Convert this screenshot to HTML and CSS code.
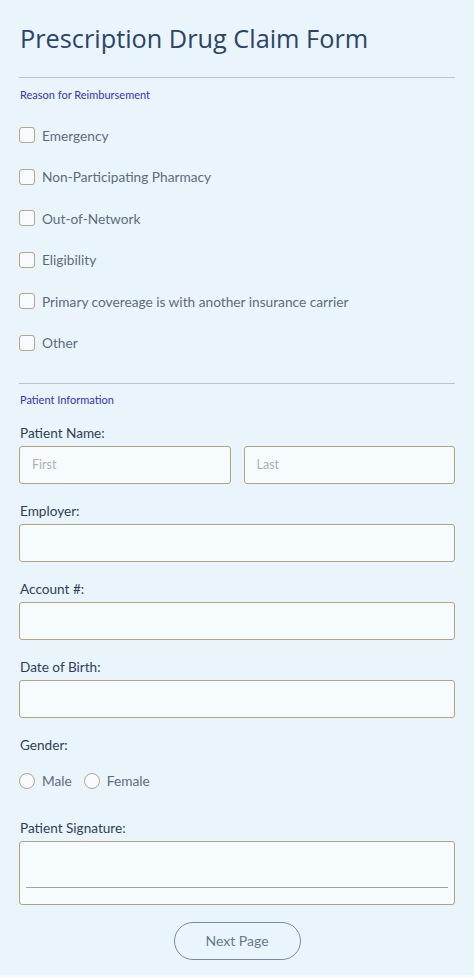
FILE: index.html
```html
<!DOCTYPE html>
<html>
<head>
<meta charset="utf-8">
<link rel="stylesheet" href="styles.css">
</head>
<body>
<form class="form">
  <h1 class="title">Prescription Drug Claim Form</h1>
  <hr class="rule">
  <div class="section-title">Reason for Reimbursement</div>
  <div class="checks">
    <label class="check"><span class="box"></span>Emergency</label>
    <label class="check"><span class="box"></span>Non-Participating Pharmacy</label>
    <label class="check"><span class="box"></span>Out-of-Network</label>
    <label class="check"><span class="box"></span>Eligibility</label>
    <label class="check"><span class="box"></span>Primary covereage is with another insurance carrier</label>
    <label class="check"><span class="box"></span>Other</label>
  </div>
  <hr class="rule rule2">
  <div class="section-title section-title2">Patient Information</div>

  <div class="field first-field">
    <div class="label">Patient Name:</div>
    <div class="name-row">
      <div class="input"><span class="ph">First</span></div>
      <div class="input"><span class="ph">Last</span></div>
    </div>
  </div>
  <div class="field">
    <div class="label">Employer:</div>
    <div class="input"></div>
  </div>
  <div class="field">
    <div class="label">Account #:</div>
    <div class="input"></div>
  </div>
  <div class="field">
    <div class="label">Date of Birth:</div>
    <div class="input"></div>
  </div>
  <div class="field">
    <div class="label">Gender:</div>
    <div class="radios">
      <label class="radio"><span class="circle"></span>Male</label>
      <label class="radio"><span class="circle"></span>Female</label>
    </div>
  </div>
  <div class="field sig-field">
    <div class="label">Patient Signature:</div>
    <div class="signature"><div class="sig-line"></div></div>
  </div>
  <div class="actions">
    <div class="btn">Next Page</div>
  </div>
</form>
</body>
</html>
```

FILE: styles.css
```css
html, body {
  margin: 0;
  padding: 0;
  background: #f7fbfd;
}
.form {
  box-sizing: border-box;
  width: 474px;
  height: 975px;
  margin: 0;
  padding: 22px 19px 0 19px;
  background: #eaf5fb;
  font-family: "Lato", "Noto Sans", sans-serif;
  display: flex;
  flex-direction: column;
}
.title {
  margin: 0 0 0 1px;
  font-family: "Open Sans", sans-serif;
  font-weight: 400;
  font-size: 25.3px;
  line-height: 32px;
  color: #2b4469;
}
.rule {
  margin: 23px 0 0 0;
  border: 0;
  height: 1px;
  background: #b9c5cc;
}
.rule2 {
  margin-top: 32px;
}
.section-title {
  margin-top: 10px;
  font-size: 11px;
  line-height: 14px;
  color: #3333c2;
  padding-left: 1px;
}
.section-title2 {
  margin-top: 9px;
}
.checks {
  margin-top: 25px;
  display: flex;
  flex-direction: column;
  gap: 25.5px;
}
.check, .radio {
  display: flex;
  align-items: center;
  height: 16px;
  font-size: 13.7px;
  color: #5d6b7b;
}
.box {
  box-sizing: border-box;
  width: 16px;
  height: 16px;
  border: 1px solid #b5a684;
  border-radius: 3px;
  background: #f7fbfe;
  margin-right: 7px;
  flex: none;
}
.field {
  display: flex;
  flex-direction: column;
  margin-top: 19px;
}
.first-field {
  margin-top: 18px;
}
.label {
  font-size: 13.6px;
  line-height: 16px;
  color: #2d3f58;
  margin-bottom: 5px;
  padding-left: 1px;
}
.name-row {
  display: grid;
  grid-template-columns: 1fr 1fr;
  column-gap: 13px;
}
.input {
  box-sizing: border-box;
  height: 38px;
  border: 1px solid #b3a47f;
  border-radius: 3px;
  background: #f6fbfe;
  display: flex;
  align-items: center;
  padding-left: 12px;
}
.ph {
  font-size: 12.5px;
  color: #a9b0b8;
}
.radios {
  display: flex;
  gap: 12px;
  margin-top: 15px;
}
.circle {
  box-sizing: border-box;
  width: 16px;
  height: 16px;
  border: 1px solid #b5a684;
  border-radius: 50%;
  background: #f7fbfe;
  margin-right: 7px;
}
.sig-field {
  margin-top: 31px;
}
.signature {
  box-sizing: border-box;
  height: 64px;
  border: 1px solid #b3a47f;
  border-radius: 3px;
  background: #f6fbfe;
  padding: 45px 6px 0 6px;
}
.sig-line {
  height: 1px;
  background: #9aa4ab;
}
.actions {
  display: flex;
  justify-content: center;
  margin-top: 17px;
}
.btn {
  box-sizing: border-box;
  width: 127px;
  height: 38px;
  border: 1px solid #7b8a99;
  border-radius: 19px;
  display: flex;
  align-items: center;
  justify-content: center;
  font-size: 14px;
  color: #66778a;
}
```
